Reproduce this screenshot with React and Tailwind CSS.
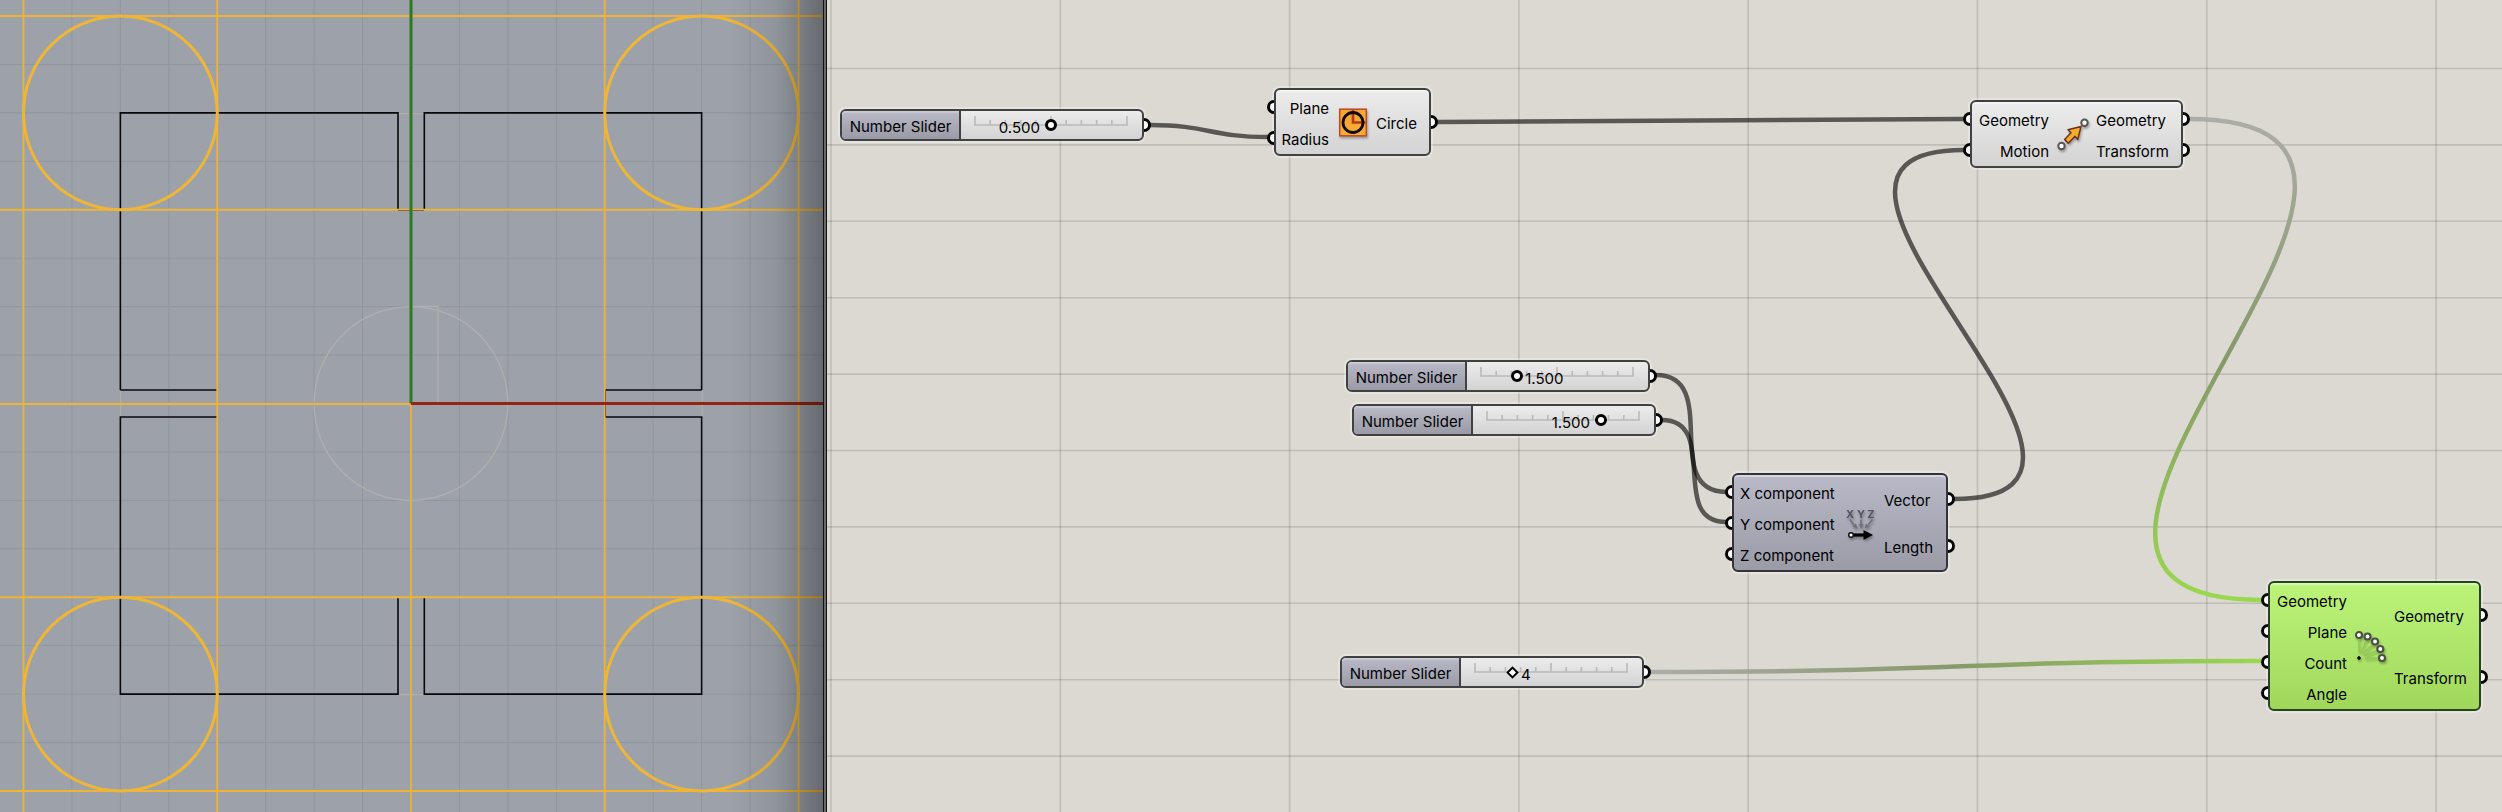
import React, { useId, useState } from "react";

const range = (n) => Array.from({ length: n }, (_, i) => i);

/* ---------- Top viewport of the model ---------- */

const UNIT = 193.75;
const OX = 411;
const OY = 403.5;

function ModelView() {
  const left = OX - 1.5 * UNIT;
  const right = OX + 1.5 * UNIT;
  const top = OY - 1.5 * UNIT;
  const bottom = OY + 1.5 * UNIT;
  return (
    <section aria-label="Top view" className="relative w-[827px] shrink-0 overflow-hidden bg-[#9da2aa]">
      <svg className="absolute inset-0 h-full w-full" aria-hidden="true">
        <g stroke="#91969d" strokeWidth="1">
          {range(17).map((i) => (
            <line key={"v" + i} x1={OX + (i - 8) * (UNIT / 4)} x2={OX + (i - 8) * (UNIT / 4)} y1="0" y2="100%" />
          ))}
          {range(60).map((i) => (
            <line key={"h" + i} y1={OY + (i - 8) * (UNIT / 4)} y2={OY + (i - 8) * (UNIT / 4)} x1="0" x2="100%" />
          ))}
        </g>
        <g fill="none" stroke="#b0afad" strokeWidth="1.3">
          <circle cx={OX} cy={OY} r={UNIT / 2} />
          <path d={`M${OX} 306.5H438V${OY}`} />
          <path d="M120.5 390V417M702 390V417M398 694.5H424M398 113.5H424" />
        </g>
        <g fill="none" stroke="#08080a" strokeWidth="1.6">
          <path d={`M${left} 390V${top}H398V209M424.3 209V${top}H${right}V390`} />
          <path d={`M${left} 390H217M605 390H${right}`} />
          <path d={`M217 417H${left}V${bottom}H398V598M424.3 598V${bottom}H${right}V417H605`} />
        </g>
        <g stroke="#efb433" strokeWidth="1.8">
          {[-2, -1, 1, 2].map((i) => (
            <line key={"v" + i} x1={OX + i * UNIT} x2={OX + i * UNIT} y1="0" y2="100%" />
          ))}
          {[-2, -1, 1, 2].map((i) => (
            <line key={"h" + i} y1={OY + i * UNIT} y2={OY + i * UNIT} x1="0" x2="100%" />
          ))}
          <line x1="0" x2={OX} y1={OY + 0.5} y2={OY + 0.5} />
          <line x1={OX} x2={OX} y1={OY} y2="100%" />
        </g>
        <g fill="none" stroke="#efb636" strokeWidth="3">
          <circle cx={left} cy={top} r={UNIT / 2} />
          <circle cx={right} cy={top} r={UNIT / 2} />
          <circle cx={left} cy={bottom} r={UNIT / 2} />
          <circle cx={right} cy={bottom} r={UNIT / 2} />
        </g>
        <path d="M398 210.5H424M605.5 390V417" stroke="#8a6a2c" strokeWidth="1" />
        <line x1={OX} x2={OX} y1="0" y2={OY} stroke="#2b7b20" strokeWidth="3" />
        <line x1={OX} x2="100%" y1={OY} y2={OY} stroke="#972313" strokeWidth="3" />
      </svg>
      <div className="absolute inset-y-0 right-1 w-24 bg-linear-to-r from-transparent via-black/8 to-black/35" />
      <div className="absolute inset-y-0 right-0 w-1 border-x border-[#111] bg-[#6a6a6a]" />
    </section>
  );
}

/* ---------- Canvas background and wires ---------- */

function CanvasGrid() {
  return (
    <svg className="absolute inset-0 h-full w-full" aria-hidden="true">
      <g stroke="#000" strokeOpacity="0.13" strokeWidth="1.6">
        {range(24).map((i) => (
          <line key={"v" + i} x1={4 + i * 229.3} x2={4 + i * 229.3} y1="0" y2="100%" />
        ))}
        {range(30).map((i) => (
          <line key={"h" + i} y1={68.5 + i * 76.4} y2={68.5 + i * 76.4} x1="0" x2="100%" />
        ))}
      </g>
    </svg>
  );
}

const wire = (x1, y1, x2, y2, d) => `M${x1} ${y1}C${x1 + d} ${y1} ${x2 - d} ${y2} ${x2} ${y2}`;

function Wires() {
  return (
    <svg className="absolute left-0 top-0 h-full w-full" aria-hidden="true">
      <defs>
        <linearGradient id="wire-down" gradientUnits="userSpaceOnUse" x1="1398" y1="119" x2="1398" y2="600">
          <stop offset="0" stopColor="#acaca8" />
          <stop offset="0.5" stopColor="#87996a" />
          <stop offset="1" stopColor="#9ad84f" />
        </linearGradient>
        <linearGradient id="wire-across" gradientUnits="userSpaceOnUse" x1="823" y1="0" x2="1434" y2="0">
          <stop offset="0" stopColor="#acaca8" />
          <stop offset="0.5" stopColor="#87996a" />
          <stop offset="1" stopColor="#9ad84f" />
        </linearGradient>
      </defs>
      <g fill="none" strokeWidth="4.5">
        <g stroke="#000" strokeOpacity="0.6">
          <path d={wire(323, 125, 441, 137, 58)} />
          <path d={wire(610, 122, 1137, 119, 263)} />
          <path d={wire(829, 375, 899, 492, 66)} />
          <path d={wire(835, 420, 899, 522, 58)} />
          <path d={wire(1127, 499, 1137, 150, 235)} />
        </g>
        <path d={wire(1362, 119, 1434, 600, 335)} stroke="url(#wire-down)" />
        <path d={wire(823, 672, 1434, 661, 305)} stroke="url(#wire-across)" />
      </g>
    </svg>
  );
}

/* ---------- Nodes ---------- */

function InPort() {
  return (
    <span className="absolute -left-[9px] top-1/2 h-[14px] w-[7px] -translate-y-1/2 rounded-l-full border-[3px] border-r-0 border-black bg-white" />
  );
}

function OutPort() {
  return (
    <span className="absolute -right-[9px] top-1/2 h-[14px] w-[7px] -translate-y-1/2 rounded-r-full border-[3px] border-l-0 border-black bg-white" />
  );
}

const tones = {
  light: "border-[#414141] from-[#ececec] to-[#d3d3d3]",
  dark: "border-[#333338] from-[#b9b9c7] to-[#9b9ba8]",
  green: "border-[#25461d] from-[#bcf47a] to-[#a0d75b]",
};

function Component({ place, tone, inputs, outputs, inputWidth, align = "justify-end", icon }) {
  return (
    <article
      className={`absolute flex rounded-md border-2 bg-linear-to-b py-px shadow-[0_0_0_2px_rgba(255,255,255,0.3),inset_0_2px_1px_rgba(255,255,255,0.45)] ${tones[tone]} ${place}`}
    >
      <ul className={`flex shrink-0 flex-col ${inputWidth}`}>
        {inputs.map((name) => (
          <li key={name} className={`relative flex h-[31px] items-center whitespace-nowrap pl-[6px] pr-2 pt-1 ${align}`}>
            <InPort />
            {name}
          </li>
        ))}
      </ul>
      <div className="flex w-8 shrink-0 items-center justify-center">{icon}</div>
      <ul className="flex flex-1 flex-col">
        {outputs.map((name) => (
          <li key={name} className="relative flex flex-1 items-center pl-[7px] pt-1">
            {name}
            <OutPort />
          </li>
        ))}
      </ul>
    </article>
  );
}

function NumberSlider({ place, initial, min, max, step, decimals, before, diamond }) {
  const id = useId();
  const [value, setValue] = useState(initial);
  const x = ((value - min) / (max - min)) * 152;
  return (
    <div
      className={`absolute flex h-8 w-[304px] rounded-md border-2 border-[#414141] bg-linear-to-b from-[#ececec] to-[#d3d3d3] shadow-[0_0_0_2px_rgba(255,255,255,0.3)] ${place}`}
    >
      <label
        htmlFor={id}
        className="flex w-[119px] shrink-0 items-center justify-center whitespace-nowrap rounded-l-sm border-r-2 border-[#414141] bg-linear-to-b from-[#b9b9c7] to-[#9b9ba8] pt-1 shadow-[inset_0_2px_1px_rgba(255,255,255,0.25)]"
      >
        Number Slider
      </label>
      <div className="relative flex-1">
        <svg className="absolute left-[13px] top-1 h-[12px] w-[154px]" aria-hidden="true">
          <g stroke="#bababa" strokeWidth="1.6">
            <line x1="0" x2="154" y1="10" y2="10" />
            {range(11).map((i) => (
              <line key={i} x1={1 + i * 15.2} x2={1 + i * 15.2} y1={i % 5 === 0 ? 1 : 5} y2="10" />
            ))}
          </g>
        </svg>
        <output
          htmlFor={id}
          className="absolute top-[7px] leading-5"
          style={before ? { right: 178 - x } : { left: 22 + x }}
        >
          {value.toFixed(decimals)}
        </output>
        <input
          id={id}
          type="range"
          min={min}
          max={max}
          step={step}
          value={value}
          onChange={(e) => setValue(Number(e.target.value))}
          className={
            diamond
              ? "absolute left-[9px] top-0.5 h-6 w-[162px] appearance-none bg-transparent [&::-webkit-slider-thumb]:size-[9px] [&::-webkit-slider-thumb]:rotate-45 [&::-webkit-slider-thumb]:appearance-none [&::-webkit-slider-thumb]:border-2 [&::-webkit-slider-thumb]:border-solid [&::-webkit-slider-thumb]:border-black [&::-webkit-slider-thumb]:bg-white"
              : "absolute left-2 top-0.5 h-6 w-[164px] appearance-none bg-transparent [&::-webkit-slider-thumb]:size-3 [&::-webkit-slider-thumb]:appearance-none [&::-webkit-slider-thumb]:rounded-full [&::-webkit-slider-thumb]:border-[3px] [&::-webkit-slider-thumb]:border-solid [&::-webkit-slider-thumb]:border-black [&::-webkit-slider-thumb]:bg-white"
          }
        />
        <OutPort />
      </div>
    </div>
  );
}

/* ---------- Icons ---------- */

const iconClass = "size-8 overflow-visible drop-shadow-[1px_2px_1px_rgba(0,0,0,0.3)]";

function CircleIcon() {
  return (
    <svg viewBox="0 0 32 32" className={iconClass} aria-hidden="true">
      <defs>
        <linearGradient id="orange" x1="0" y1="0" x2="1" y2="1">
          <stop offset="0" stopColor="#f6a035" />
          <stop offset="1" stopColor="#fbb034" />
        </linearGradient>
      </defs>
      <rect x="2.7" y="3.2" width="26.6" height="26.6" fill="url(#orange)" stroke="#bb4a26" strokeWidth="1.5" />
      <path d="M16 4V16.5H28.5" fill="none" stroke="#b03a1c" strokeWidth="2.6" />
      <circle cx="16" cy="16.5" r="10" fill="none" stroke="#120c04" strokeWidth="2.8" />
    </svg>
  );
}

function MoveIcon() {
  return (
    <svg viewBox="0 0 32 32" className={iconClass} aria-hidden="true">
      <path
        d="M7.6 21.4L14 14.8L11 11.8L24 8.4L20.8 21.4L17.8 18.4L11.4 25.2Z"
        fill="#f3ab2e"
        stroke="#6b3216"
        strokeWidth="1.5"
        strokeLinejoin="round"
      />
      <circle cx="4.5" cy="28" r="3.2" fill="#fff" stroke="#555" strokeWidth="2" />
      <circle cx="27.5" cy="4.8" r="3.2" fill="#fff" stroke="#555" strokeWidth="2" />
    </svg>
  );
}

function VectorIcon() {
  return (
    <svg viewBox="0 0 32 32" className={iconClass} aria-hidden="true">
      <g fill="#55555c" fontSize="11" fontWeight="700" textAnchor="middle">
        <text x="5" y="10.5">X</text>
        <text x="16" y="10.5">Y</text>
        <text x="26" y="10.5">Z</text>
      </g>
      <g stroke="#707078" strokeWidth="1.6" fill="#707078">
        <path d="M5 12.5L9 18M16 12.5V18M27.5 12.5L23 18" />
        <path d="M12.5 21.5L7.4 19.6L11 16.6ZM16 21.5L13.7 17H18.3ZM19.5 21.5L21 16.6L24.6 19.6Z" stroke="none" />
      </g>
      <path d="M8 28H20" stroke="#000" strokeWidth="3.2" />
      <path d="M18.5 23L28 28L18.5 33Z" />
      <circle cx="6" cy="28" r="2.3" fill="#fff" stroke="#111" strokeWidth="1.5" />
    </svg>
  );
}

function PolarIcon() {
  const points = [
    [4, 5],
    [12.5, 6.5],
    [20, 11.5],
    [25.3, 19],
    [27, 28],
  ];
  return (
    <svg viewBox="0 0 32 32" className={iconClass} aria-hidden="true">
      {points.map(([x, y]) => (
        <line key={x} x1={4 + (x - 4) * 0.25} y1={28 + (y - 28) * 0.25} x2={x} y2={y} stroke="#8fc354" strokeWidth="1.1" />
      ))}
      <path d="M4 25.8L6.2 28L4 30.2L1.8 28Z" />
      {points.map(([x, y]) => (
        <circle key={x} cx={x} cy={y} r="3" fill="#fff" stroke="#4b4f45" strokeWidth="2.1" />
      ))}
    </svg>
  );
}

/* ---------- Page ---------- */

export default function App() {
  return (
    <main className="flex min-h-screen font-['Inter','Liberation_Sans',sans-serif] text-[15px] leading-5 text-black">
      <ModelView />
      <section aria-label="Definition" className="relative min-w-0 flex-1 overflow-hidden bg-[#dcd9d3]">
        <CanvasGrid />
        <Wires />
        <NumberSlider place="left-[13px] top-[109px]" initial={0.5} min={0} max={1} step={0.001} decimals={3} before />
        <NumberSlider place="left-[519px] top-[360px]" initial={1.5} min={0} max={6.3} step={0.001} decimals={3} />
        <NumberSlider place="left-[525px] top-[404px]" initial={1.5} min={0} max={2} step={0.001} decimals={3} before />
        <NumberSlider place="left-[513px] top-[656px]" initial={4} min={0} max={16} step={1} decimals={0} diamond />
        <Component
          place="left-[447px] top-[88px] w-[157px]"
          tone="light"
          inputWidth="w-[61px]"
          inputs={["Plane", "Radius"]}
          outputs={["Circle"]}
          icon={<CircleIcon />}
        />
        <Component
          place="left-[1143px] top-[100px] w-[213px]"
          tone="light"
          inputWidth="w-[85px]"
          inputs={["Geometry", "Motion"]}
          outputs={["Geometry", "Transform"]}
          icon={<MoveIcon />}
        />
        <Component
          place="left-[905px] top-[473px] w-[216px]"
          tone="dark"
          inputWidth="w-[111px]"
          align="justify-start"
          inputs={["X component", "Y component", "Z component"]}
          outputs={["Vector", "Length"]}
          icon={<VectorIcon />}
        />
        <Component
          place="left-[1441px] top-[581px] w-[213px]"
          tone="green"
          inputWidth="w-[85px]"
          inputs={["Geometry", "Plane", "Count", "Angle"]}
          outputs={["Geometry", "Transform"]}
          icon={<PolarIcon />}
        />
      </section>
    </main>
  );
}
